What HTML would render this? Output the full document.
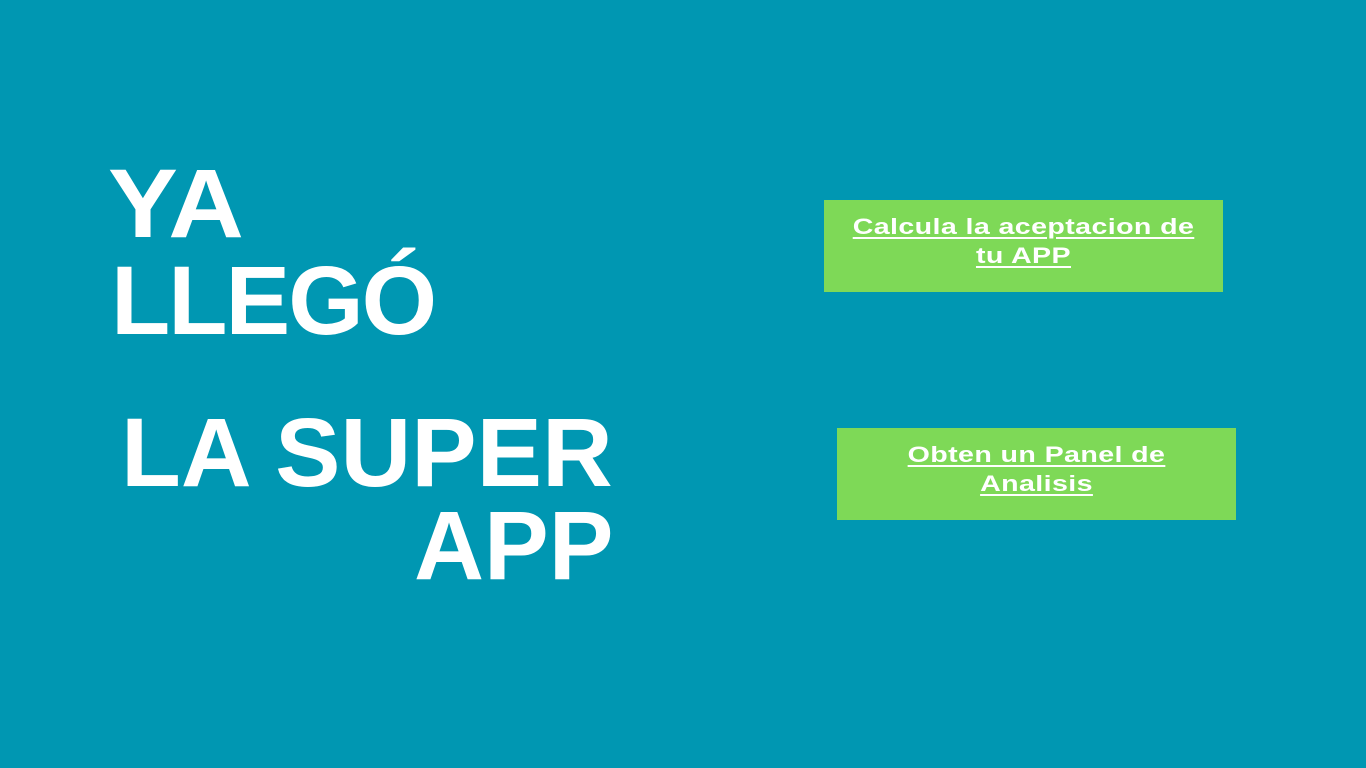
<!DOCTYPE html>
<html><head><meta charset="utf-8"><style>
html,body{margin:0;padding:0}
body{width:1366px;height:768px;background:#0097b2;position:relative;overflow:hidden;font-family:"Liberation Sans",sans-serif;color:#fff}
.big{position:absolute;font-weight:bold;font-size:97px;line-height:97px;white-space:nowrap;transform-origin:left top}
.btn{position:absolute;background:#7ed957;width:399px;height:92px}
.btn div{position:absolute;left:0;right:0;text-align:center;font-weight:bold;font-size:22px;line-height:29px;text-decoration:underline;text-decoration-thickness:2px;text-underline-offset:3px;letter-spacing:0.3px;transform:scaleX(1.3);transform-origin:center top}
</style></head><body>
<div class="big" style="left:108px;top:155px;transform:scaleX(1.08);">YA</div>
<div class="big" style="left:111px;top:252px;letter-spacing:-2px;">LLEGÓ</div>
<div class="big" style="left:121px;top:404px;transform:scaleX(1.01);">LA SUPER</div>
<div class="big" style="left:414px;top:497px;">APP</div>
<div class="btn" style="left:824px;top:200px;"><div style="top:12px;">Calcula la aceptacion de<br>tu APP</div></div>
<div class="btn" style="left:837px;top:428px;"><div style="top:12px;">Obten un Panel de<br>Analisis</div></div>
</body></html>
